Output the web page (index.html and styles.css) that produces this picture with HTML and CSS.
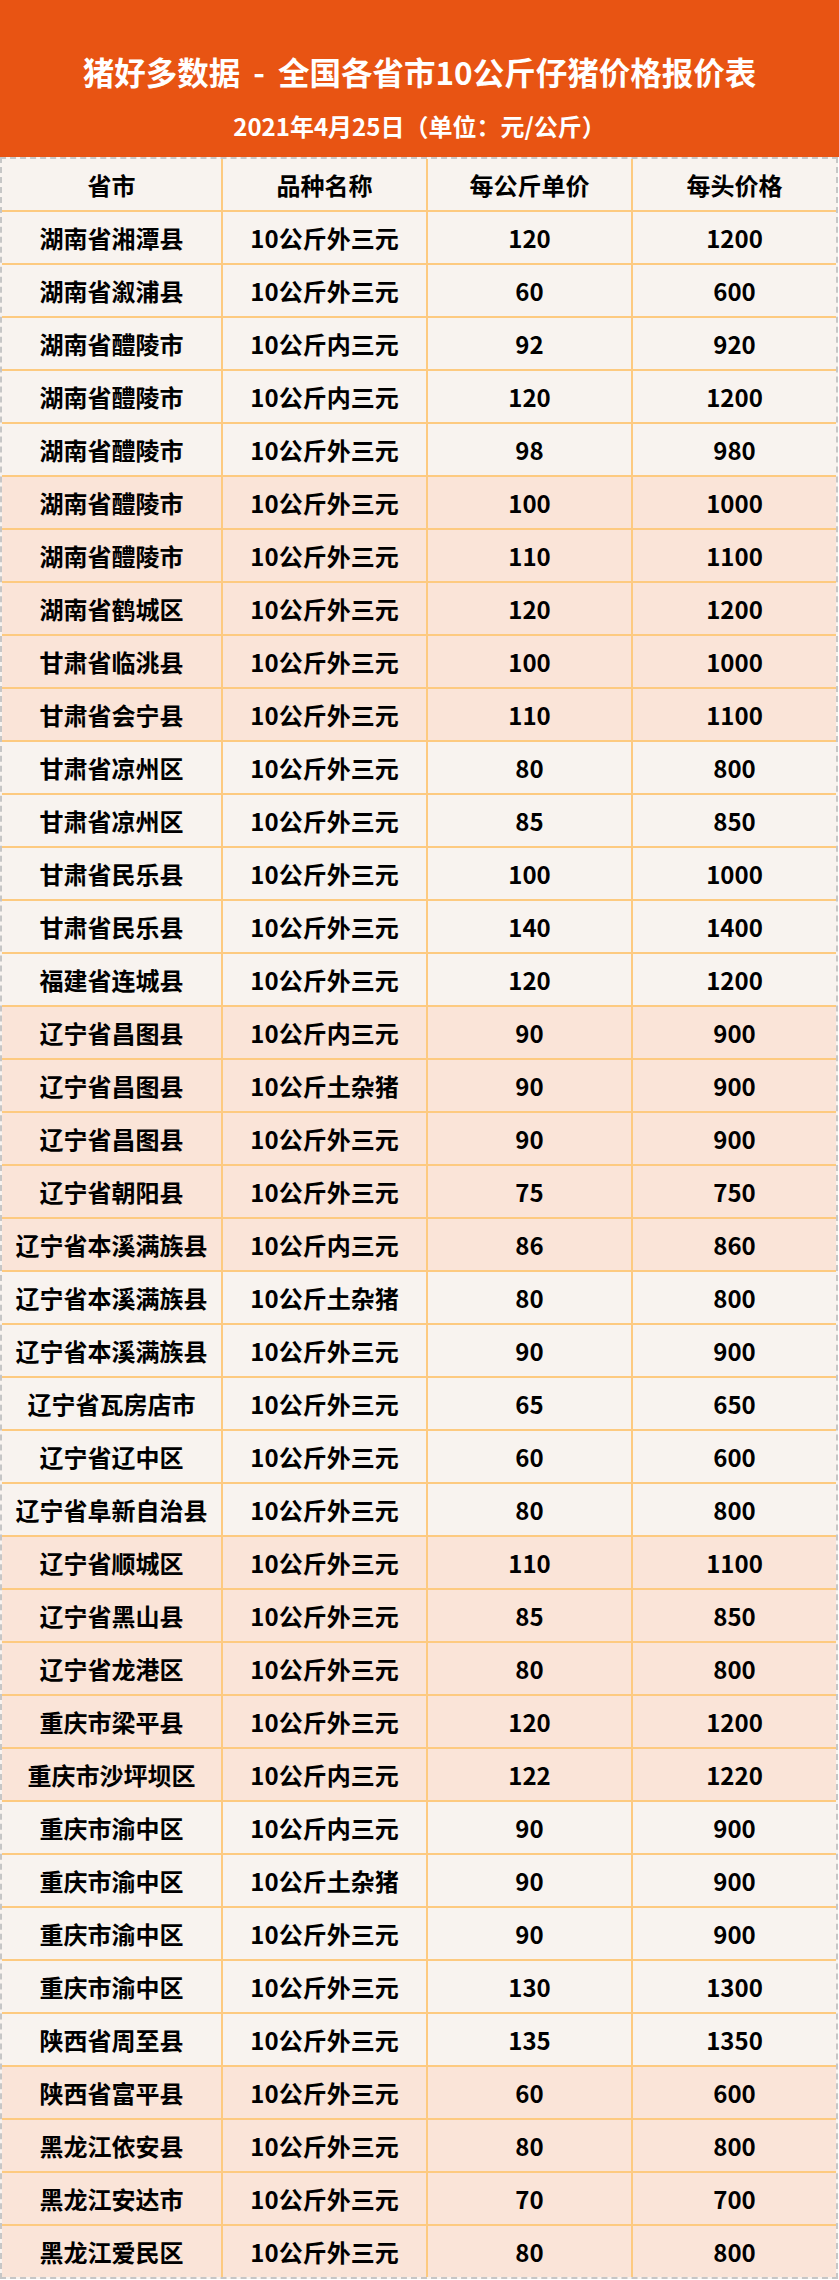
FILE: index.html
```html
<!DOCTYPE html>
<html lang="zh-CN">
<head>
<meta charset="utf-8">
<title>猪好多数据 - 全国各省市10公斤仔猪价格报价表</title>
<link rel="stylesheet" href="styles.css">
</head>
<body>
<header class="banner">
  <h1 class="title">猪好多数据<span class="dash">-</span>全国各省市10公斤仔猪价格报价表</h1>
  <p class="subtitle">2021年4月25日（单位：元/公斤）</p>
</header>
<table class="price-table">
  <colgroup>
    <col class="c1"><col class="c2"><col class="c3"><col class="c4">
  </colgroup>
  <thead>
    <tr><th>省市</th><th>品种名称</th><th>每公斤单价</th><th>每头价格</th></tr>
  </thead>
  <tbody>
    <tr><td>湖南省湘潭县</td><td>10公斤外三元</td><td>120</td><td>1200</td></tr>
    <tr><td>湖南省溆浦县</td><td>10公斤外三元</td><td>60</td><td>600</td></tr>
    <tr><td>湖南省醴陵市</td><td>10公斤内三元</td><td>92</td><td>920</td></tr>
    <tr><td>湖南省醴陵市</td><td>10公斤内三元</td><td>120</td><td>1200</td></tr>
    <tr><td>湖南省醴陵市</td><td>10公斤外三元</td><td>98</td><td>980</td></tr>
    <tr class="alt"><td>湖南省醴陵市</td><td>10公斤外三元</td><td>100</td><td>1000</td></tr>
    <tr class="alt"><td>湖南省醴陵市</td><td>10公斤外三元</td><td>110</td><td>1100</td></tr>
    <tr class="alt"><td>湖南省鹤城区</td><td>10公斤外三元</td><td>120</td><td>1200</td></tr>
    <tr class="alt"><td>甘肃省临洮县</td><td>10公斤外三元</td><td>100</td><td>1000</td></tr>
    <tr class="alt"><td>甘肃省会宁县</td><td>10公斤外三元</td><td>110</td><td>1100</td></tr>
    <tr><td>甘肃省凉州区</td><td>10公斤外三元</td><td>80</td><td>800</td></tr>
    <tr><td>甘肃省凉州区</td><td>10公斤外三元</td><td>85</td><td>850</td></tr>
    <tr><td>甘肃省民乐县</td><td>10公斤外三元</td><td>100</td><td>1000</td></tr>
    <tr><td>甘肃省民乐县</td><td>10公斤外三元</td><td>140</td><td>1400</td></tr>
    <tr><td>福建省连城县</td><td>10公斤外三元</td><td>120</td><td>1200</td></tr>
    <tr class="alt"><td>辽宁省昌图县</td><td>10公斤内三元</td><td>90</td><td>900</td></tr>
    <tr class="alt"><td>辽宁省昌图县</td><td>10公斤土杂猪</td><td>90</td><td>900</td></tr>
    <tr class="alt"><td>辽宁省昌图县</td><td>10公斤外三元</td><td>90</td><td>900</td></tr>
    <tr class="alt"><td>辽宁省朝阳县</td><td>10公斤外三元</td><td>75</td><td>750</td></tr>
    <tr class="alt"><td>辽宁省本溪满族县</td><td>10公斤内三元</td><td>86</td><td>860</td></tr>
    <tr><td>辽宁省本溪满族县</td><td>10公斤土杂猪</td><td>80</td><td>800</td></tr>
    <tr><td>辽宁省本溪满族县</td><td>10公斤外三元</td><td>90</td><td>900</td></tr>
    <tr><td>辽宁省瓦房店市</td><td>10公斤外三元</td><td>65</td><td>650</td></tr>
    <tr><td>辽宁省辽中区</td><td>10公斤外三元</td><td>60</td><td>600</td></tr>
    <tr><td>辽宁省阜新自治县</td><td>10公斤外三元</td><td>80</td><td>800</td></tr>
    <tr class="alt"><td>辽宁省顺城区</td><td>10公斤外三元</td><td>110</td><td>1100</td></tr>
    <tr class="alt"><td>辽宁省黑山县</td><td>10公斤外三元</td><td>85</td><td>850</td></tr>
    <tr class="alt"><td>辽宁省龙港区</td><td>10公斤外三元</td><td>80</td><td>800</td></tr>
    <tr class="alt"><td>重庆市梁平县</td><td>10公斤外三元</td><td>120</td><td>1200</td></tr>
    <tr class="alt"><td>重庆市沙坪坝区</td><td>10公斤内三元</td><td>122</td><td>1220</td></tr>
    <tr><td>重庆市渝中区</td><td>10公斤内三元</td><td>90</td><td>900</td></tr>
    <tr><td>重庆市渝中区</td><td>10公斤土杂猪</td><td>90</td><td>900</td></tr>
    <tr><td>重庆市渝中区</td><td>10公斤外三元</td><td>90</td><td>900</td></tr>
    <tr><td>重庆市渝中区</td><td>10公斤外三元</td><td>130</td><td>1300</td></tr>
    <tr><td>陕西省周至县</td><td>10公斤外三元</td><td>135</td><td>1350</td></tr>
    <tr class="alt"><td>陕西省富平县</td><td>10公斤外三元</td><td>60</td><td>600</td></tr>
    <tr class="alt"><td>黑龙江依安县</td><td>10公斤外三元</td><td>80</td><td>800</td></tr>
    <tr class="alt"><td>黑龙江安达市</td><td>10公斤外三元</td><td>70</td><td>700</td></tr>
    <tr class="alt"><td>黑龙江爱民区</td><td>10公斤外三元</td><td>80</td><td>800</td></tr>
  </tbody>
</table>
</body>
</html>
```
FILE: styles.css
```css
html, body {
  margin: 0;
  padding: 0;
  background: #ffffff;
}

body {
  font-family: "Noto Sans CJK SC", "Noto Sans", "Liberation Sans", sans-serif;
  color: #000;
  width: 839px;
}

.banner {
  box-sizing: border-box;
  height: 157px;
  background: #e85413;
  color: #fff;
  display: flex;
  flex-direction: column;
  align-items: center;
  padding-top: 51px;
}

.title {
  margin: 0;
  font-size: 31.5px;
  line-height: 40px;
  font-weight: 700;
  white-space: nowrap;
}

.dash {
  display: inline-block;
  margin: 0 13px;
}

.subtitle {
  margin: 20px 0 0;
  font-size: 24px;
  line-height: 30px;
  font-weight: 700;
  white-space: nowrap;
}

.price-table {
  box-sizing: border-box;
  width: 838px;
  table-layout: fixed;
  border-collapse: separate;
  border-spacing: 0;
  border: 2px dashed #c6c6c6;
  background: #f8f3ef;
}

.c1 { width: 221px; }
.c2 { width: 205px; }
.c3 { width: 205px; }
.c4 { width: 203px; }

.price-table th,
.price-table td {
  box-sizing: border-box;
  padding: 0;
  text-align: center;
  vertical-align: middle;
  font-size: 24px;
  font-weight: 700;
  line-height: 30px;
  white-space: nowrap;
  border-right: 2px solid #fdca80;
  border-bottom: 2px solid #fdca80;
}

.price-table th {
  height: 53px;
}

.price-table td {
  height: 53px;
}

.price-table th:last-child,
.price-table td:last-child {
  border-right: none;
}

.price-table tbody tr:last-child td {
  border-bottom: none;
  height: 51px;
}

.price-table tr.alt td {
  background: #fae4d8;
}
```
